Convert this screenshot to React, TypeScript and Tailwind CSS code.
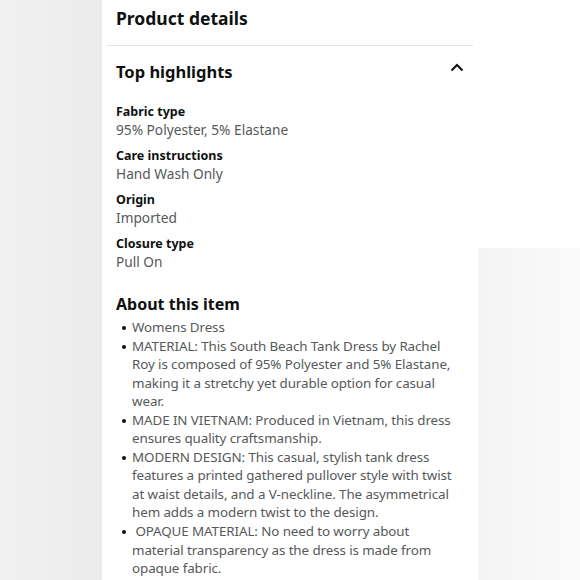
import React from "react";

const specs = [
  { label: "Fabric type", value: "95% Polyester, 5% Elastane" },
  { label: "Care instructions", value: "Hand Wash Only" },
  { label: "Origin", value: "Imported" },
  { label: "Closure type", value: "Pull On" },
];

const bullets = [
  "Womens Dress",
  "MATERIAL: This South Beach Tank Dress by Rachel Roy is composed of 95% Polyester and 5% Elastane, making it a stretchy yet durable option for casual wear.",
  "MADE IN VIETNAM: Produced in Vietnam, this dress ensures quality craftsmanship.",
  "MODERN DESIGN: This casual, stylish tank dress features a printed gathered pullover style with twist at waist details, and a V-neckline. The asymmetrical hem adds a modern twist to the design.",
  "\u00a0OPAQUE MATERIAL: No need to worry about material transparency as the dress is made from opaque fabric.",
];

export default function App() {
  return (
    <div
      className="w-[580px] h-[580px] flex overflow-hidden bg-white"
      style={{ fontFamily: '"Noto Sans", "Open Sans", sans-serif' }}
    >
      <div className="w-[102px] h-full shrink-0 bg-gradient-to-r from-[#f1f1f1] to-[#ebebeb]" />
      <div className="w-[376px] h-full shrink-0 bg-white flex flex-col overflow-hidden">
        <div className="shrink-0 px-[14px] pt-[5px] h-[45px]">
          <h1 className="text-[17.5px] font-bold text-[#0f1111] leading-[26px]">Product details</h1>
        </div>
        <div className="shrink-0 mx-[5px] h-px bg-[#e3e3e3]" />
        <div className="shrink-0 px-[14px] pt-[15px] flex items-center justify-between h-[40px]">
          <h2 className="text-[16.5px] font-bold text-[#0f1111] leading-[24px] mt-[-4px]">Top highlights</h2>
          <svg width="14" height="9" viewBox="0 0 14 9" className="mr-0 mt-[-12px]">
            <path d="M1.5 7.5 L7 2 L12.5 7.5" fill="none" stroke="#0f1111" strokeWidth="2" />
          </svg>
        </div>
        <div className="shrink-0 px-[14px] pt-[17px] flex flex-col gap-[8px]">
          {specs.map((s) => (
            <div key={s.label} className="flex flex-col">
              <div className="text-[12.5px] font-bold text-[#0f1111] leading-[18px]">{s.label}</div>
              <div className="text-[13.7px] text-[#565959] leading-[18px]">{s.value}</div>
            </div>
          ))}
        </div>
        <div className="shrink-0 px-[14px] pt-[22px]">
          <h2 className="text-[16px] font-bold text-[#0f1111] leading-[22px]">About this item</h2>
          <ul className="mt-[3px] pl-[16px] pr-[8px]">
            {bullets.map((b, i) => (
              <li key={i} className="relative text-[13.4px] tracking-[-0.1px] text-[#565959] leading-[18.55px]">
                <span className="absolute left-[-10px] top-[8px] w-[4px] h-[4px] rounded-full bg-[#0f1111]" />
                {b}
              </li>
            ))}
          </ul>
        </div>
      </div>
      <div className="flex-1 h-full flex flex-col">
        <div className="h-[248px] bg-white" />
        <div className="flex-1 bg-gradient-to-r from-[#f4f4f4] to-[#fafafa]" />
      </div>
    </div>
  );
}
